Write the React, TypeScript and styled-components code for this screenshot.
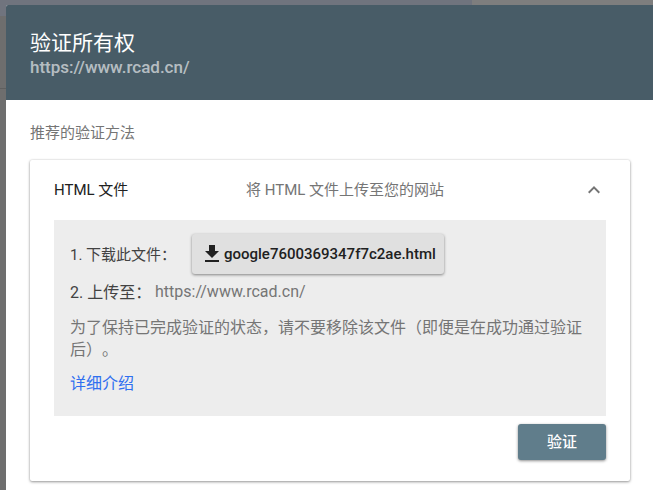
import React from "react";
import styled, { createGlobalStyle } from "styled-components";

const Global = createGlobalStyle`
  html, body { margin: 0; padding: 0; width: 653px; height: 490px; overflow: hidden; background: #6e6e6e; }
  #root { width: 653px; height: 490px; }
  * { box-sizing: border-box; }
`;

const Backdrop = styled.div`
  width: 653px;
  height: 490px;
  padding: 5px 0 0 6px;
  overflow: hidden;
  font-family: Roboto, "Noto Sans CJK SC", sans-serif;
  text-spacing-trim: space-all;
  background:
    linear-gradient(#70747e, #70747e) 0 0 / 472px 16px no-repeat,
    linear-gradient(#7e7e7e, #7e7e7e) 472px 0 / 181px 5px no-repeat,
    linear-gradient(#5f5f5f, #5f5f5f) 0 88px / 6px 1px no-repeat,
    #6e6e6e;
`;

const Dialog = styled.section`
  width: 647px;
  height: 485px;
  background: #fff;
  border-radius: 2px 0 0 0;
  overflow: hidden;
`;

const Header = styled.header`
  height: 95px;
  background: #485c67;
  padding: 25px 24px 0;
`;

const Title = styled.h1`
  margin: 0;
  font-size: 21px;
  font-weight: 400;
  line-height: 26px;
  color: #fff;
`;

const Subtitle = styled.div`
  font-size: 17px;
  font-weight: 500;
  line-height: 22px;
  color: rgba(255, 255, 255, 0.62);
`;

const Body = styled.div`
  padding: 23px 24px 0;
`;

const SectionLabel = styled.div`
  font-size: 15px;
  line-height: 20px;
  color: #757575;
  margin-bottom: 17px;
`;

const Card = styled.article`
  width: 600px;
  height: 321px;
  background: #fff;
  border-radius: 2px;
  box-shadow: 0 1px 3px rgba(0, 0, 0, 0.4), 0 0 2px rgba(0, 0, 0, 0.12);
  padding: 0 24px;
`;

const CardHead = styled.div`
  height: 60px;
  display: grid;
  grid-template-columns: 192px 1fr 24px;
  align-items: center;
`;

const MethodName = styled.div`
  font-size: 15px;
  color: #212121;
  padding-bottom: 3px;
`;

const MethodDesc = styled.div`
  font-size: 15px;
  color: #757575;
  padding-bottom: 3px;
`;

const Panel = styled.div`
  height: 196px;
  background: #ededed;
  padding: 14px 16px;
`;

const Step = styled.div`
  display: flex;
  align-items: center;
  color: #424242;
`;

const DownloadRow = styled(Step)`
  height: 40px;
  font-size: 15px;
`;

const UploadRow = styled(Step)`
  height: 24px;
  margin-top: 6px;
  font-size: 16px;
`;

const StepLabel = styled.span<{ $width: number }>`
  width: ${(p) => p.$width}px;
  flex: none;
  padding-bottom: 2px;
`;

const FileButton = styled.button`
  width: 252px;
  height: 40px;
  display: flex;
  align-items: center;
  padding: 0 0 0 8px;
  border: 0;
  border-radius: 3px;
  background: #e0e0e0;
  box-shadow: 0 1px 3px rgba(0, 0, 0, 0.45);
  font: 500 15px Roboto, sans-serif;
  color: #212121;
`;

const Url = styled.span`
  color: #757575;
  font-size: 16px;
  padding-bottom: 2px;
`;

const Note = styled.p`
  margin: 13px 0 0;
  font-size: 16px;
  line-height: 22px;
  color: #757575;
`;

const MoreLink = styled.a`
  display: block;
  margin-top: 12px;
  font-size: 16px;
  line-height: 22px;
  color: #2f6ff0;
`;

const Actions = styled.div`
  display: flex;
  justify-content: flex-end;
  margin-top: 8px;
`;

const VerifyButton = styled.button`
  width: 88px;
  height: 36px;
  border: 0;
  border-radius: 3px;
  padding: 0 0 3px;
  background: #607d8b;
  color: #fff;
  font: 500 15px Roboto, "Noto Sans CJK SC", sans-serif;
  box-shadow: 0 1px 3px rgba(0, 0, 0, 0.45);
`;

const Chevron = () => (
  <svg width="24" height="24" viewBox="0 0 24 24" fill="#757575" aria-hidden="true">
    <path d="M12 8l-6 6 1.41 1.41L12 10.83l4.59 4.58L18 14z" />
  </svg>
);

const DownloadIcon = () => (
  <svg width="24" height="24" viewBox="0 0 24 24" fill="#212121" aria-hidden="true">
    <path d="M19 9h-4V3H9v6H5l7 7 7-7zM5 18v2h14v-2H5z" />
  </svg>
);

export default function App() {
  return (
    <Backdrop>
      <Global />
      <Dialog>
        <Header>
          <Title>验证所有权</Title>
          <Subtitle>https://www.rcad.cn/</Subtitle>
        </Header>
        <Body>
          <SectionLabel>推荐的验证方法</SectionLabel>
          <Card>
            <CardHead>
              <MethodName>HTML 文件</MethodName>
              <MethodDesc>将 HTML 文件上传至您的网站</MethodDesc>
              <Chevron />
            </CardHead>
            <Panel>
              <DownloadRow>
                <StepLabel $width={122}>1. 下载此文件：</StepLabel>
                <FileButton>
                  <DownloadIcon />
                  google7600369347f7c2ae.html
                </FileButton>
              </DownloadRow>
              <UploadRow>
                <StepLabel $width={85}>2. 上传至：</StepLabel>
                <Url>https://www.rcad.cn/</Url>
              </UploadRow>
              <Note>为了保持已完成验证的状态，请不要移除该文件（即便是在成功通过验证后）。</Note>
              <MoreLink>详细介绍</MoreLink>
            </Panel>
            <Actions>
              <VerifyButton>验证</VerifyButton>
            </Actions>
          </Card>
        </Body>
      </Dialog>
    </Backdrop>
  );
}
